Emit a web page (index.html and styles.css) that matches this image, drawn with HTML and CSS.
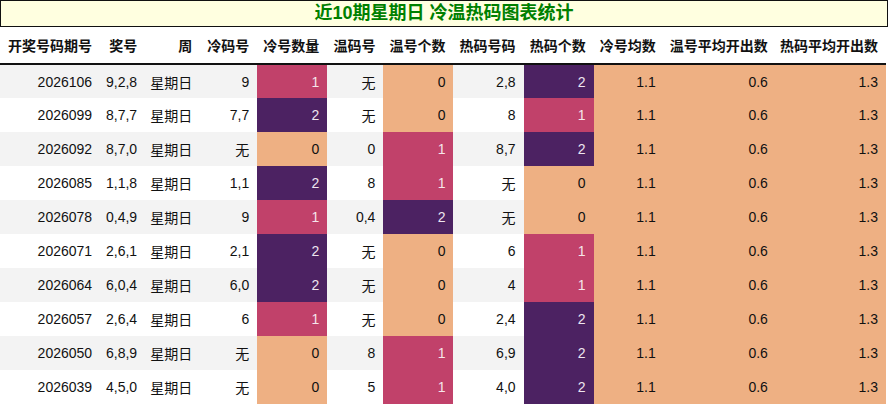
FILE: index.html
```html
<!DOCTYPE html>
<html lang="zh">
<head>
<meta charset="utf-8">
<link rel="stylesheet" href="styles.css">
</head>
<body>
<div class="title">近10期星期日 冷温热码图表统计</div>
<table class="stats">
<colgroup>
<col class="w100"><col class="w45"><col class="w55"><col class="w57"><col class="w70"><col class="w56"><col class="w70"><col class="w70"><col class="w70"><col class="w70"><col class="w112"><col class="w110">
</colgroup>
<thead>
<tr><th>开奖号码期号</th><th>奖号</th><th>周</th><th>冷码号</th><th>冷号数量</th><th>温码号</th><th>温号个数</th><th>热码号码</th><th>热码个数</th><th>冷号均数</th><th>温号平均开出数</th><th>热码平均开出数</th></tr>
</thead>
<tbody>
<tr><td>2026106</td><td>9,2,8</td><td>星期日</td><td>9</td><td class="c1">1</td><td>无</td><td class="c0">0</td><td>2,8</td><td class="c2">2</td><td class="c0">1.1</td><td class="c0">0.6</td><td class="c0">1.3</td></tr>
<tr><td>2026099</td><td>8,7,7</td><td>星期日</td><td>7,7</td><td class="c2">2</td><td>无</td><td class="c0">0</td><td>8</td><td class="c1">1</td><td class="c0">1.1</td><td class="c0">0.6</td><td class="c0">1.3</td></tr>
<tr><td>2026092</td><td>8,7,0</td><td>星期日</td><td>无</td><td class="c0">0</td><td>0</td><td class="c1">1</td><td>8,7</td><td class="c2">2</td><td class="c0">1.1</td><td class="c0">0.6</td><td class="c0">1.3</td></tr>
<tr><td>2026085</td><td>1,1,8</td><td>星期日</td><td>1,1</td><td class="c2">2</td><td>8</td><td class="c1">1</td><td>无</td><td class="c0">0</td><td class="c0">1.1</td><td class="c0">0.6</td><td class="c0">1.3</td></tr>
<tr><td>2026078</td><td>0,4,9</td><td>星期日</td><td>9</td><td class="c1">1</td><td>0,4</td><td class="c2">2</td><td>无</td><td class="c0">0</td><td class="c0">1.1</td><td class="c0">0.6</td><td class="c0">1.3</td></tr>
<tr><td>2026071</td><td>2,6,1</td><td>星期日</td><td>2,1</td><td class="c2">2</td><td>无</td><td class="c0">0</td><td>6</td><td class="c1">1</td><td class="c0">1.1</td><td class="c0">0.6</td><td class="c0">1.3</td></tr>
<tr><td>2026064</td><td>6,0,4</td><td>星期日</td><td>6,0</td><td class="c2">2</td><td>无</td><td class="c0">0</td><td>4</td><td class="c1">1</td><td class="c0">1.1</td><td class="c0">0.6</td><td class="c0">1.3</td></tr>
<tr><td>2026057</td><td>2,6,4</td><td>星期日</td><td>6</td><td class="c1">1</td><td>无</td><td class="c0">0</td><td>2,4</td><td class="c2">2</td><td class="c0">1.1</td><td class="c0">0.6</td><td class="c0">1.3</td></tr>
<tr><td>2026050</td><td>6,8,9</td><td>星期日</td><td>无</td><td class="c0">0</td><td>8</td><td class="c1">1</td><td>6,9</td><td class="c2">2</td><td class="c0">1.1</td><td class="c0">0.6</td><td class="c0">1.3</td></tr>
<tr><td>2026039</td><td>4,5,0</td><td>星期日</td><td>无</td><td class="c0">0</td><td>5</td><td class="c1">1</td><td>4,0</td><td class="c2">2</td><td class="c0">1.1</td><td class="c0">0.6</td><td class="c0">1.3</td></tr>
</tbody>
</table>
</body>
</html>
```

FILE: styles.css
```css
html, body {
  margin: 0;
  padding: 0;
  background: #ffffff;
  font-family: "Liberation Sans", "Noto Sans CJK SC", sans-serif;
  font-size: 14px;
  color: #111111;
}

.title {
  box-sizing: border-box;
  width: 888px;
  height: 27px;
  border: 1px solid #111111;
  background: #ffffe0;
  color: #008000;
  font-weight: bold;
  font-size: 18px;
  line-height: 24px;
  text-align: center;
}

.stats {
  border-collapse: collapse;
  table-layout: fixed;
  width: 886px;
}

.w100 { width: 100px; }
.w45 { width: 45px; }
.w55 { width: 55px; }
.w57 { width: 57px; }
.w70 { width: 70px; }
.w56 { width: 56px; }
.w112 { width: 112px; }
.w110 { width: 110px; }

.stats th {
  height: 36px;
  padding: 0 8px 0 0;
  text-align: right;
  font-weight: bold;
  font-size: 14px;
  color: #111111;
  border-bottom: 2px solid #111111;
  white-space: nowrap;
}

.stats td {
  height: 34px;
  padding: 0 8px 0 0;
  text-align: right;
  white-space: nowrap;
  box-sizing: border-box;
}

.stats tbody tr:nth-child(odd) { background: #f3f3f3; }
.stats tbody tr:nth-child(even) { background: #ffffff; }

.stats td.c0 { background: #eeb083; color: #111111; }
.stats td.c1 { background: #c1416a; color: #f5e6ea; }
.stats td.c2 { background: #4c2262; color: #eee6f0; }
```
